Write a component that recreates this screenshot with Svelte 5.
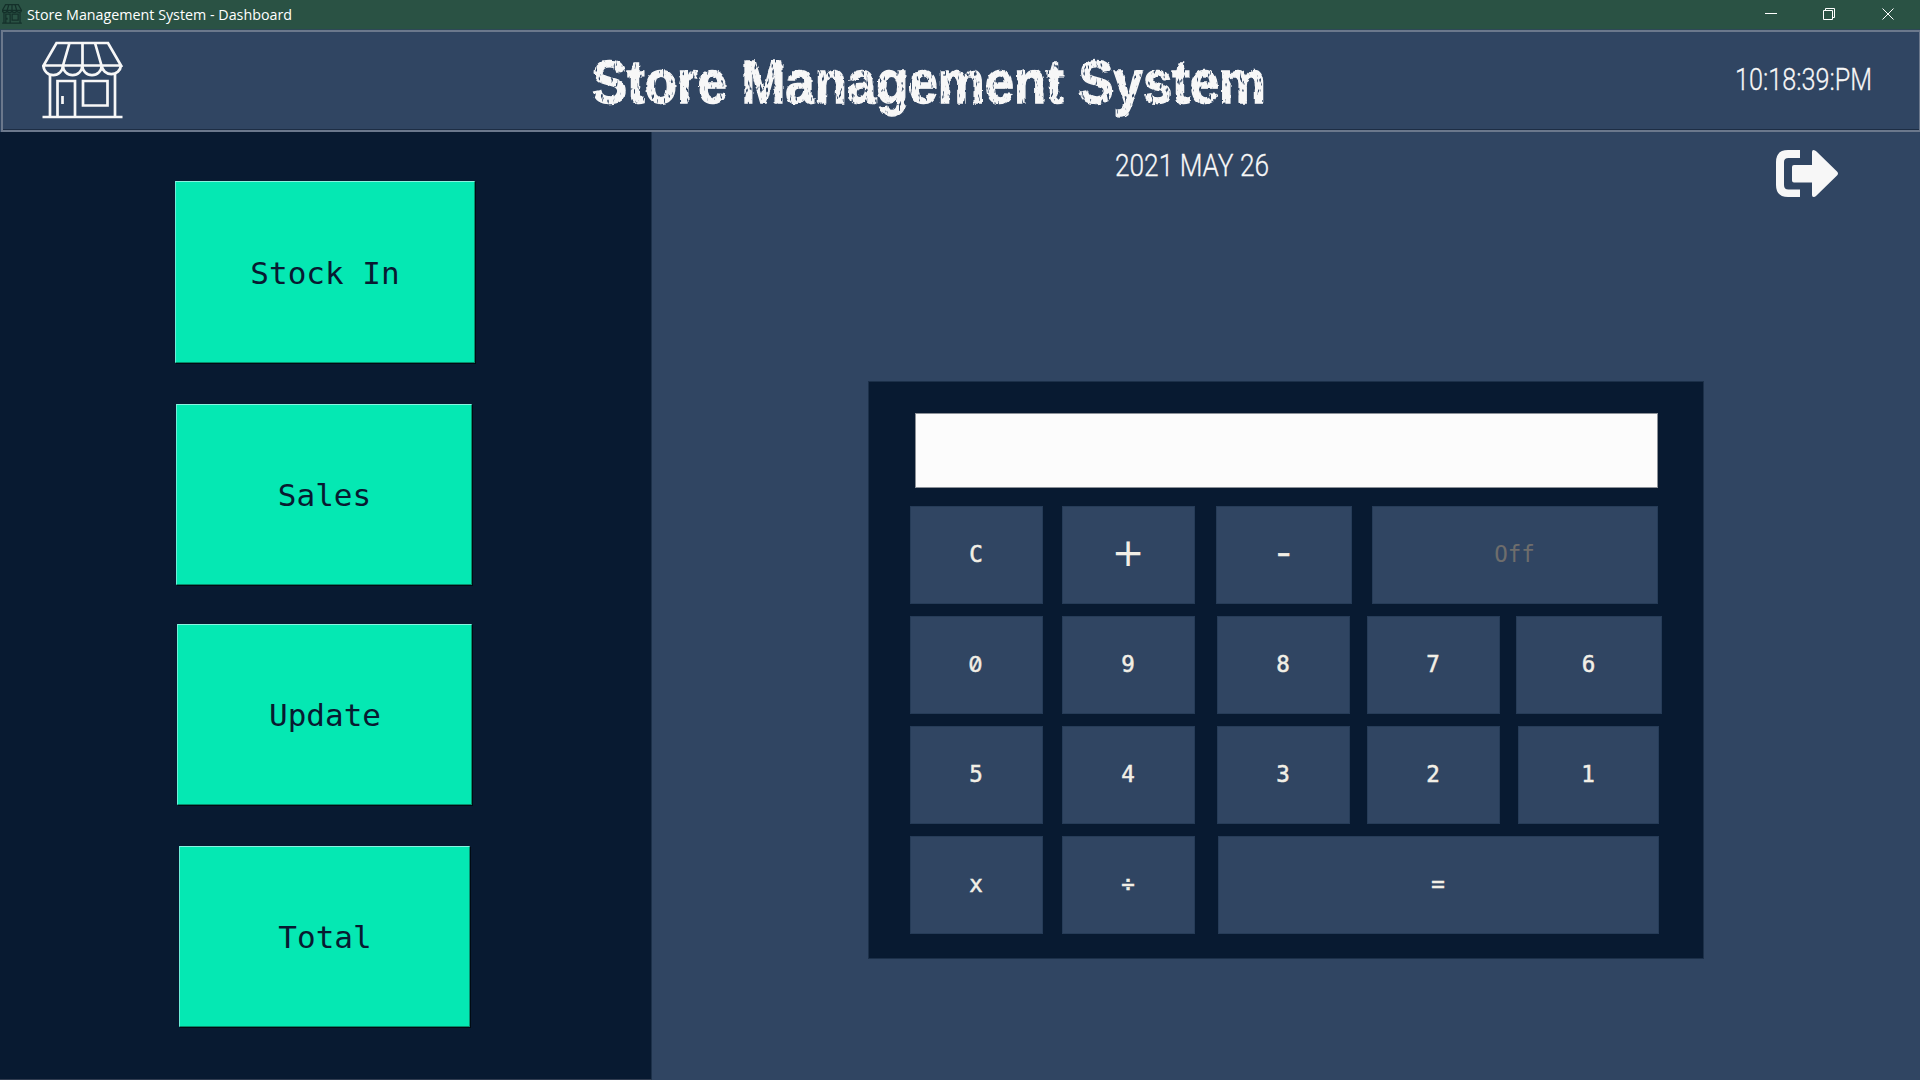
<script>
  const menu = [
    { label: 'Stock In', cls: 'stock' },
    { label: 'Sales', cls: 'sales' },
    { label: 'Update', cls: 'update' },
    { label: 'Total', cls: 'total' }
  ];

  // w: key width, gap: space before the key
  const rows = [
    [
      { t: 'C', w: 133, gap: 0 },
      { t: '+', w: 133, gap: 19, cls: 'plus' },
      { t: '-', w: 136, gap: 21, cls: 'minus' },
      { t: 'Off', w: 286, gap: 20, cls: 'off' }
    ],
    [
      { t: '0', w: 133, gap: 0, cls: 'zero' },
      { t: '9', w: 133, gap: 19 },
      { t: '8', w: 133, gap: 22 },
      { t: '7', w: 133, gap: 17 },
      { t: '6', w: 146, gap: 16 }
    ],
    [
      { t: '5', w: 133, gap: 0 },
      { t: '4', w: 133, gap: 19 },
      { t: '3', w: 133, gap: 22 },
      { t: '2', w: 133, gap: 17 },
      { t: '1', w: 141, gap: 18 }
    ],
    [
      { t: 'x', w: 133, gap: 0 },
      { t: '÷', w: 133, gap: 19 },
      { t: '=', w: 441, gap: 23 }
    ]
  ];
</script>

{#snippet store()}
  <path d="M14.5 2H66L79 24.500H1.5Z M27.5 2L21 24.500 M40.5 2V24.500 M53 2L59.500 24.500" />
  <path d="M1.500 24.500A9.700 9.700 0 0 0 20.900 24.500A9.700 9.700 0 0 0 40.300 24.500A9.700 9.700 0 0 0 59.700 24.500A9.700 9.700 0 0 0 79 24.500" />
  <path d="M8 33V76 M73 33V76 M0.500 76H80.500 M15.500 76V40H33V76 M41 40H65.500V64.500H41Z M20.500 55V63" />
{/snippet}

<div class="window">
  <div class="titlebar">
    <svg class="appicon" viewBox="0 0 81 79">{@render store()}</svg>
    <svg class="apptitle" width="290" height="29"><text x="1" y="20" textLength="265" lengthAdjust="spacingAndGlyphs">Store Management System - Dashboard</text></svg>
    <svg class="controls" width="142" height="29" viewBox="0 0 142 29">
      <path d="M5 13.500H17 M63.500 10.500H72.500V19.500H63.500Z M65.500 10V8.500H74.500V17.500H73" />
      <path d="M122.500 8.500L133.500 19.500M133.500 8.500L122.500 19.500" />
    </svg>
  </div>

  <header>
    <svg class="logo" width="81" height="79" viewBox="0 0 81 79">{@render store()}</svg>
    <svg class="heading" width="710" height="90">
      <defs>
        <filter id="worn" x="-2%" y="-5%" width="104%" height="110%">
          <feTurbulence type="fractalNoise" baseFrequency="0.2" numOctaves="1" seed="4" result="edge" />
          <feDisplacementMap in="SourceGraphic" in2="edge" scale="3.5" xChannelSelector="R" yChannelSelector="G" result="rough" />
          <feTurbulence type="fractalNoise" baseFrequency="0.34 0.13" numOctaves="2" seed="9" result="grain" />
          <feColorMatrix in="grain" type="matrix" values="0 0 0 0 1  0 0 0 0 1  0 0 0 0 1  -8 0 0 0 6" result="mask" />
          <feComposite in="rough" in2="mask" operator="in" />
        </filter>
      </defs>
      <text x="20" y="64" textLength="674" lengthAdjust="spacingAndGlyphs" filter="url(#worn)">Store Management System</text>
    </svg>
    <svg class="led clock" width="160" height="60"><text x="12" y="40" textLength="137" lengthAdjust="spacingAndGlyphs">10:18:39:PM</text></svg>
  </header>

  <main>
    <nav>
      {#each menu as m}
        <button class="menu {m.cls}">{m.label}</button>
      {/each}
    </nav>

    <section class="work">
      <div class="top">
        <svg class="led date" width="176" height="50"><text x="10" y="34" textLength="154" lengthAdjust="spacingAndGlyphs">2021 MAY 26</text></svg>
        <svg class="exit" width="62" height="47" viewBox="0 0 62 47">
          <path d="M24 0H12Q0 0 0 12V35Q0 47 12 47H24V39.500H12.500Q8 39.500 8 35V12Q8 8 12.500 8H24Z" />
          <path d="M18 15H36V2Q36 0 37.500 0Q39 0 40.500 1.500L61 21.500Q63 23.500 61 25.500L40.500 45.500Q39 47 37.500 47Q36 47 36 45V32.500H18Q16 32.500 16 30.500V17Q16 15 18 15Z" />
        </svg>
      </div>

      <div class="calc">
        <div class="display"></div>
        {#each rows as row}
          <div class="row">
            {#each row as k}
              <button class="key {k.cls ?? ''}" style="width:{k.w}px;margin-left:{k.gap}px"><span>{k.t}</span></button>
            {/each}
          </div>
        {/each}
      </div>
    </section>
  </main>
</div>

<style>
  :global(body) { margin: 0; background: #304562; }
  * { box-sizing: border-box; }
  .window { width: 1920px; height: 1080px; display: flex; flex-direction: column; overflow: hidden; background: #304562; }

  .titlebar { height: 30px; flex: none; display: flex; align-items: flex-start; background: #2a5244; border-bottom: 1px solid #2d4856; }
  .appicon { width: 20px; height: 20px; margin: 4px 0 0 2px; fill: none; stroke: #14302a; stroke-width: 5; }
  .apptitle { margin-left: 4px; fill: #fff; font: 15px "Open Sans", "Noto Sans", sans-serif; }
  .controls { margin-left: auto; margin-right: 18px; fill: none; stroke: #fff; stroke-width: 1; }

  header { height: 102px; flex: none; display: flex; align-items: flex-start; border: 2px solid #6b788c; border-width: 2px 1px 2px 2px; margin-left: 1px; box-shadow: inset 0 -1px #1d2d44; }
  .logo { margin: 9px 0 0 39px; fill: none; stroke: #f7f7f7; stroke-width: 2.700; }
  .heading { margin: 7px 0 0 449px; }
  .heading text { fill: #f7f7f7; stroke: #f7f7f7; stroke-width: 1.400; font: bold 61px "Liberation Sans", Arial, sans-serif; }
  .led text { fill: #f7f7f7; stroke: #f7f7f7; stroke-width: 0.300; font: 300 32px Roboto, sans-serif; }
  .clock { margin: 18px 36px 0 auto; }

  main { flex: 1; display: flex; }
  nav { width: 652px; background: #081a31; border-right: 1px solid #1c3049; border-bottom: 1px solid #303c50; display: flex; flex-direction: column; padding-top: 49px; gap: 40px; }
  .menu { height: 182px; border: 1px solid; border-color: #8af3e0 #07906f #078a6c #6eeed8; border-radius: 0; padding: 0 0 0 1px; background: #05e8b3; box-shadow: 1px 1px #020a12; color: #081a31; font: 31px "DejaVu Sans Mono", monospace; }
  .stock { width: 300px; margin-left: 175px; padding: 2px 0 0; }
  .sales { width: 296px; height: 181px; margin-left: 176px; margin-top: 1px; }
  .update { width: 295px; height: 181px; margin-left: 177px; margin-top: -1px; }
  .total { width: 291px; margin-left: 179px; margin-top: 1px; height: 181px; }

  .work { flex: 1; padding-left: 216px; }
  .top { height: 249px; display: flex; align-items: flex-start; }
  .date { margin: 10px 0 0 237px; }
  .exit { margin: 18px 82px 0 auto; fill: #f7f7f7; }

  .calc { width: 836px; height: 578px; background: #081a31; border: 1px solid #1c3049; padding: 31px 0 0 41px; display: flex; flex-direction: column; gap: 12px; }
  .display { width: 743px; height: 75px; margin: 0 0 6px 5px; background: #fcfcfc; border: 1px solid #8c9198; }
  .row { display: flex; height: 98px; }
  .key { height: 98px; flex: none; border: 1px solid #263c58; border-radius: 0; padding: 0 1px 1px 0; background: #304562; color: #f2efe6; font: 22.500px "DejaVu Sans Mono", monospace; line-height: 1; -webkit-text-stroke: 0.500px; }
  .key span { display: inline-block; }
  .plus { font: 39px "DejaVu Sans", sans-serif; line-height: 1; padding-bottom: 5px; -webkit-text-stroke: 0; }
  .minus span { transform: translateY(-1px) scale(1.800, 1.400); }
  .off { color: #6e6d6c; -webkit-text-stroke: 0; }
  .zero { font: 22px Inter, sans-serif; font-feature-settings: "zero"; padding: 0 2px 2px 0; }
</style>
